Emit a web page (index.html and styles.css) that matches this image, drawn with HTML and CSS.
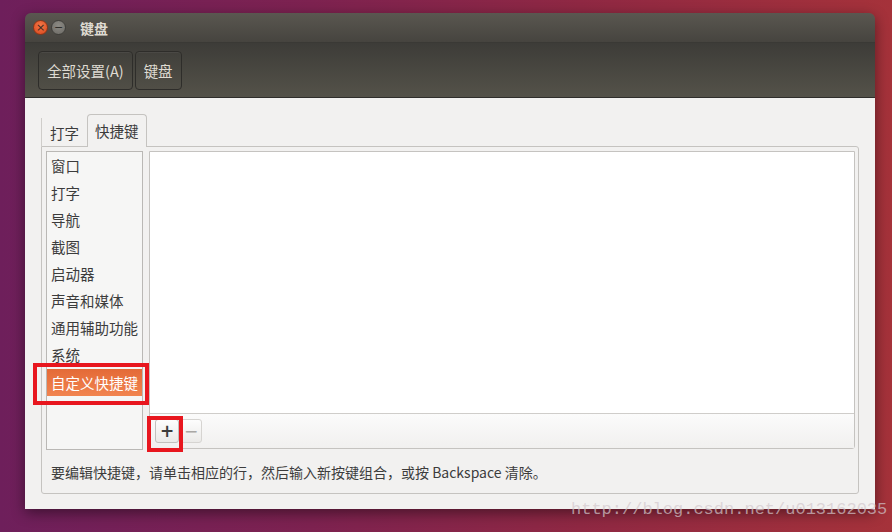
FILE: index.html
```html
<!DOCTYPE html>
<html lang="zh-CN">
<head>
    <meta charset="UTF-8">
    <title>键盘</title>
    <link rel="stylesheet" href="styles.css">
</head>
<body>

    <!-- Cửa sổ bàn phím -->
    <div class="window">
        <div class="titlebar">
            <span class="wbtn close">×</span>
            <span class="wbtn mini">−</span>
            <span class="title">键盘</span>
        </div>

        <div class="toolbar">
            <button class="tool-btn">全部设置(A)</button>
            <button class="tool-btn">键盘</button>
        </div>

        <div class="content">
            <div class="tabs">
                <div class="tab">打字</div>
                <div class="tab active">快捷键</div>
            </div>

            <div class="frame">
                <div class="panes">
                    <ul class="sections">
                        <li>窗口</li>
                        <li>打字</li>
                        <li>导航</li>
                        <li>截图</li>
                        <li>启动器</li>
                        <li>声音和媒体</li>
                        <li>通用辅助功能</li>
                        <li>系统</li>
                        <li class="selected">自定义快捷键</li>
                    </ul>

                    <div class="shortcuts">
                        <div class="tree"></div>
                        <div class="tree-tools">
                            <button class="small-btn">+</button>
                            <button class="small-btn disabled">−</button>
                        </div>
                    </div>
                </div>

                <p class="hint">要编辑快捷键，请单击相应的行，然后输入新按键组合，或按 Backspace 清除。</p>
            </div>
        </div>
    </div>

    <!-- Khung đánh dấu màu đỏ -->
    <div class="mark mark-item"></div>
    <div class="mark mark-add"></div>

    <div class="watermark">http://blog.csdn.net/u013162035</div>

</body>
</html>
```

FILE: styles.css
```css
body {
    margin: 0;
    width: 892px;
    height: 532px;
    overflow: hidden;
    position: relative;
    padding: 13px 0 0 25px;
    box-sizing: border-box;
    font-family: "Noto Sans CJK SC", "Noto Sans", sans-serif;
    background: linear-gradient(to right, #6e1f5b 0%, #7d2250 35%, #8f2843 65%, #a5323a 100%);
}

.window {
    width: 850px;
    height: 496px;
    display: flex;
    flex-direction: column;
    border-radius: 6px 6px 0 0;
    overflow: hidden;
    box-shadow: 0 4px 14px rgba(0, 0, 0, 0.45);
}

.titlebar {
    height: 29px;
    display: flex;
    align-items: center;
    padding-left: 8px;
    background: linear-gradient(#5a5750, #46443f);
    border-bottom: 1px solid #3a3935;
}

.wbtn {
    width: 15px;
    height: 15px;
    border-radius: 50%;
    margin-right: 3px;
    display: flex;
    align-items: center;
    justify-content: center;
    font-family: "DejaVu Sans", sans-serif;
    font-size: 11px;
    line-height: 1;
    color: #3b2a22;
}

.close {
    background: radial-gradient(circle at 50% 35%, #f27848, #d9461c);
    border: 1px solid #8a3517;
    box-sizing: border-box;
}

.mini {
    background: radial-gradient(circle at 50% 35%, #8c8a84, #6c6a65);
    border: 1px solid #3f3e3a;
    box-sizing: border-box;
    color: #2f2e2b;
}

.title {
    margin-left: 11px;
    font-size: 14px;
    font-weight: bold;
    color: #dfdbd2;
}

.toolbar {
    height: 55px;
    box-sizing: border-box;
    padding: 8px 13px;
    display: flex;
    gap: 2px;
    background: linear-gradient(#3d3c38, #545249);
    border-bottom: 1px solid #2f2e2b;
}

.tool-btn {
    height: 39px;
    padding: 0 8px;
    font-family: inherit;
    font-size: 14.5px;
    color: #dfdbd2;
    background: transparent;
    border: 1px solid #2e2d2a;
    border-radius: 4px;
    box-shadow: inset 0 1px 0 rgba(255, 255, 255, 0.05);
}

.content {
    flex: 1;
    background: #f2f1f0;
    padding: 16px 16px 15px 16px;
    display: flex;
    flex-direction: column;
}

.tabs {
    display: flex;
    align-items: flex-end;
    height: 32px;
}

.tab {
    height: 28px;
    padding: 0 8px;
    box-sizing: border-box;
    display: flex;
    align-items: center;
    font-size: 14.5px;
    color: #3c3c3c;
    border-left: 1px solid #cfcdca;
}

.tab.active {
    height: 33px;
    padding: 0 7px 2px 7px;
    margin-bottom: -1px;
    border: 1px solid #c5c3c0;
    border-bottom: none;
    border-radius: 4px 4px 0 0;
    background: #f2f1f0;
    position: relative;
    z-index: 1;
}

.frame {
    flex: 1;
    border: 1px solid #c5c3c0;
    border-radius: 0 3px 3px 3px;
    padding: 4px 3px 0 4px;
    display: flex;
    flex-direction: column;
}

.panes {
    display: flex;
    gap: 6px;
}

.sections {
    list-style: none;
    margin: 0;
    padding: 0;
    width: 97px;
    height: 299px;
    box-sizing: border-box;
    background: #f6f6f5;
    border: 1px solid #bab8b5;
}

.sections li {
    height: 27px;
    line-height: 27px;
    padding-left: 4px;
    font-size: 14.5px;
    color: #3c3c3c;
    white-space: nowrap;
}

.sections li.selected {
    margin-top: 1px;
    color: #ffffff;
    background: linear-gradient(#e46a37, #f1844f);
}

.shortcuts {
    flex: 1;
    height: 298px;
    display: flex;
    flex-direction: column;
    border: 1px solid #c5c3c0;
    border-radius: 0 0 3px 3px;
    box-sizing: border-box;
}

.tree {
    flex: 1;
    background: #ffffff;
    border-bottom: 1px solid #cfcdca;
}

.tree-tools {
    height: 34px;
    display: flex;
    align-items: center;
    padding-left: 5px;
    gap: 1px;
    background: linear-gradient(#fbfbfb, #f1f0ef);
}

.small-btn {
    width: 24px;
    height: 24px;
    padding: 0;
    font-family: "DejaVu Sans", sans-serif;
    font-size: 17px;
    font-weight: bold;
    line-height: 1;
    color: #3c3c3c;
    background: linear-gradient(#fdfdfd, #ebeae8);
    border: 1px solid #c2c0bd;
    border-radius: 3px;
}

.small-btn.disabled {
    width: 22px;
    font-weight: normal;
    color: #a9a7a4;
    border-color: #d6d4d1;
}

.hint {
    margin: 0;
    flex: 1;
    display: flex;
    align-items: center;
    padding-left: 5px;
    font-size: 14px;
    color: #3c3c3c;
}

/* các khung đỏ đánh dấu */
.mark {
    position: absolute;
    border: 4px solid #e8161e;
}

.mark-item {
    left: 33px;
    top: 363px;
    width: 108px;
    height: 34px;
}

.mark-add {
    left: 147px;
    top: 416px;
    width: 28px;
    height: 28px;
}

.watermark {
    position: absolute;
    left: 571px;
    top: 500px;
    font-family: "Liberation Mono", monospace;
    font-size: 17px;
    color: rgba(210, 200, 205, 0.7);
}
```
